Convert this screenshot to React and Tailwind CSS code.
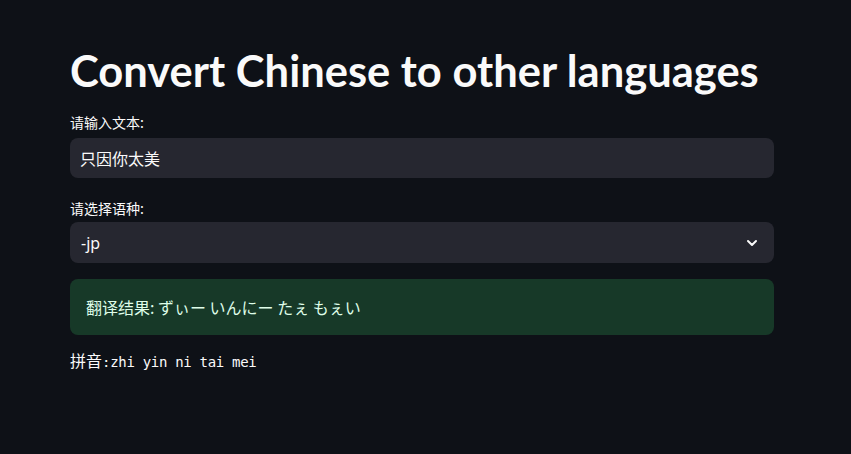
import React from 'react'

const App = () => {
  return (
    <div className="min-h-screen w-full bg-[#0e1117] text-[#fafafa] font-['Noto_Sans','Noto_Sans_CJK_SC',sans-serif]">
      <div className="w-[704px] ml-[70px] pt-[40px]">
        <h1 className="text-[43.5px] leading-[60px] font-bold font-['Lato','Noto_Sans_CJK_SC',sans-serif] mb-[12px]">
          Convert Chinese to other languages
        </h1>

        {/* text input */}
        <label className="block text-[14px] leading-[20px] mb-[6px] font-['Noto_Sans_CJK_SC',sans-serif]">
          请输入文本:
        </label>
        <div className="h-[40px] rounded-[8px] bg-[#262730] flex items-center px-[10px] text-[16px] font-['Noto_Sans_CJK_SC',sans-serif]">
          只因你太美
        </div>

        {/* select */}
        <label className="block mt-[20px] text-[14px] leading-[20px] mb-[4px] font-['Noto_Sans_CJK_SC',sans-serif]">
          请选择语种:
        </label>
        <div className="h-[41px] rounded-[8px] bg-[#262730] flex items-center justify-between pl-[11px] pr-[16px] text-[16px]">
          <span>-jp</span>
          <svg width="12" height="8" viewBox="0 0 12 8" fill="none">
            <path d="M2 2l4 4 4-4" stroke="#fafafa" strokeWidth="2" strokeLinecap="round" strokeLinejoin="round" />
          </svg>
        </div>

        {/* result */}
        <div className="mt-[16px] h-[56px] rounded-[8px] bg-[#173928] flex items-center px-[16px] text-[16px] text-[#dffde9] font-['Noto_Sans_CJK_JP','Noto_Sans_CJK_SC',sans-serif]">
          翻译结果: ずぃー いんにー たぇ もぇい
        </div>

        <div className="mt-[13px] text-[14px] leading-[24px] tracking-[-0.3px] font-['DejaVu_Sans_Mono','Noto_Sans_CJK_SC',monospace]">
          <span className="font-['Noto_Sans_CJK_SC',sans-serif] text-[16px] tracking-normal">拼音</span>:zhi yin ni tai mei
        </div>
      </div>
    </div>
  )
}

export default App
